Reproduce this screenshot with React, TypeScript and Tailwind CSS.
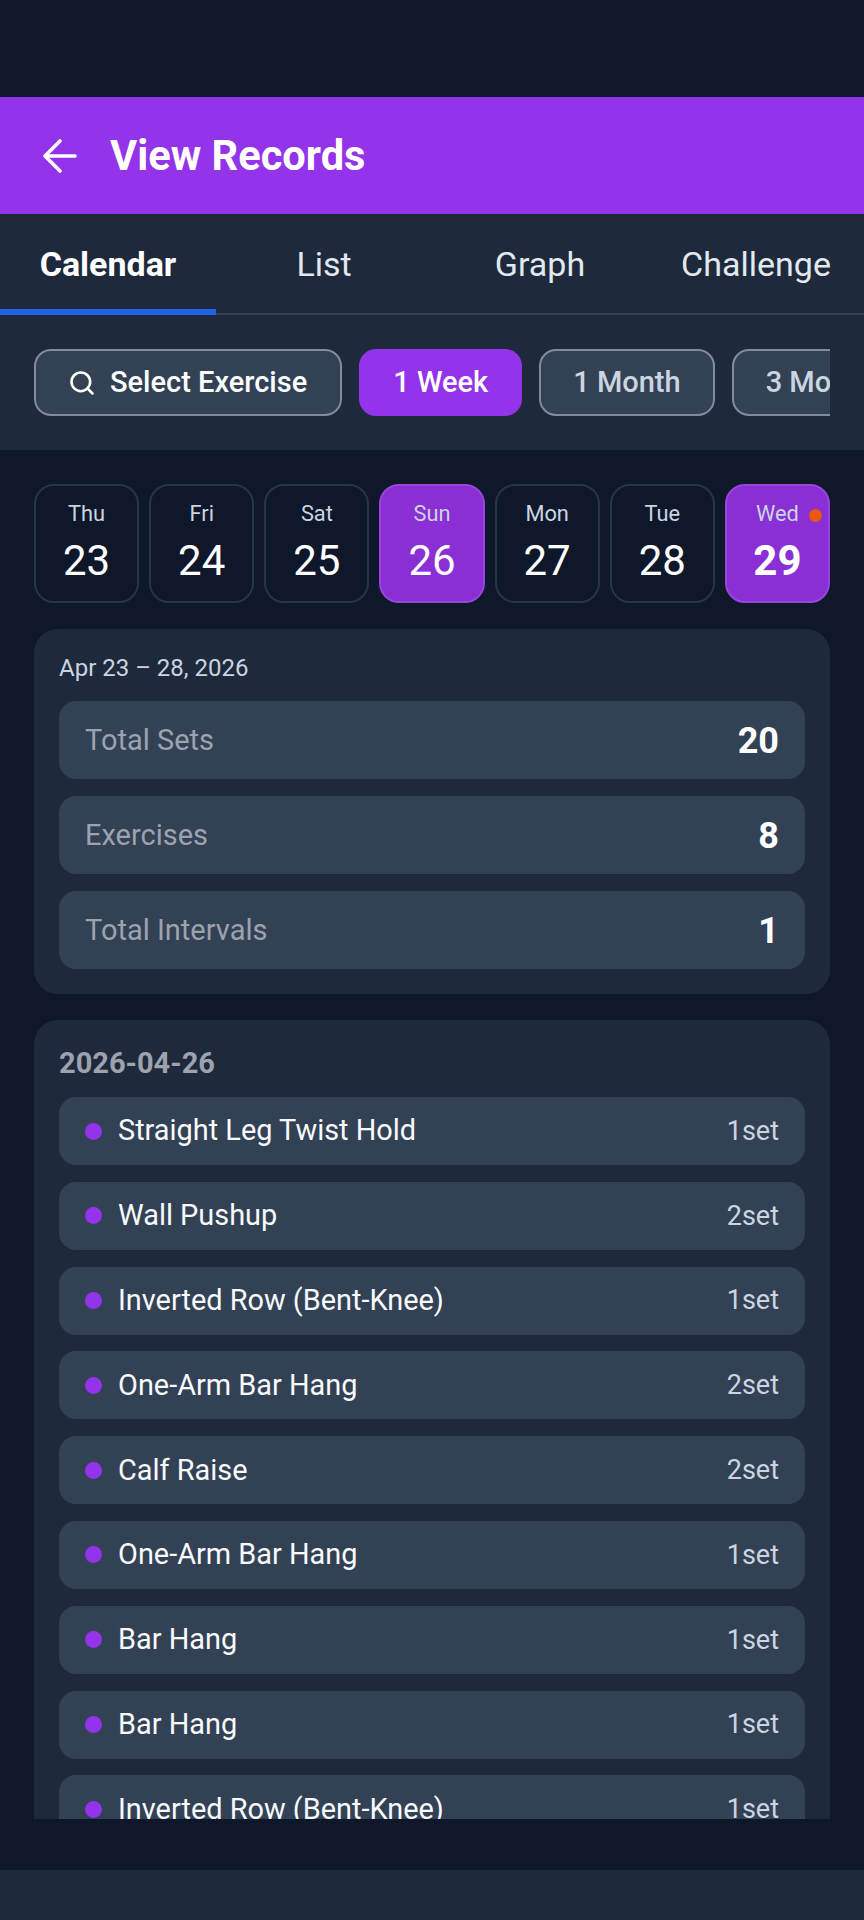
import { Search } from "lucide-react";

const tabs = ["Calendar", "List", "Graph", "Challenge"];

const ranges = [
  { label: "1 Week", active: true },
  { label: "1 Month", active: false },
  { label: "3 Months", active: false },
];

const days = [
  { name: "Thu", date: 23 },
  { name: "Fri", date: 24 },
  { name: "Sat", date: 25 },
  { name: "Sun", date: 26, selected: true },
  { name: "Mon", date: 27 },
  { name: "Tue", date: 28 },
  { name: "Wed", date: 29, selected: true, today: true },
];

const totals = [
  { label: "Total Sets", value: 20 },
  { label: "Exercises", value: 8 },
  { label: "Total Intervals", value: 1 },
];

const records = [
  { name: "Straight Leg Twist Hold", sets: 1 },
  { name: "Wall Pushup", sets: 2 },
  { name: "Inverted Row (Bent-Knee)", sets: 1 },
  { name: "One-Arm Bar Hang", sets: 2 },
  { name: "Calf Raise", sets: 2 },
  { name: "One-Arm Bar Hang", sets: 1 },
  { name: "Bar Hang", sets: 1 },
  { name: "Bar Hang", sets: 1 },
  { name: "Inverted Row (Bent-Knee)", sets: 1 },
];

export default function App() {
  return (
    <div
      className="flex flex-col w-[864px] h-[1920px] bg-[#0f172a] text-white overflow-hidden"
      style={{ fontFamily: "Roboto, sans-serif" }}
    >
      <div className="h-[97px] shrink-0" />

      <header className="flex items-center h-[117px] shrink-0 pl-[42px] gap-[32px] bg-[#9333ea]">
        <svg width="36" height="36" viewBox="0 0 36 36" fill="none" stroke="white" strokeWidth="3.6" strokeLinecap="round" strokeLinejoin="round">
          <path d="M33 18H3M18 3 3 18l15 15" />
        </svg>
        <h1 className="text-[41.6px] leading-none font-bold">View Records</h1>
      </header>

      <div className="bg-[#1e293b] shrink-0">
        <nav className="flex h-[101px] border-b-2 border-[#334155]">
          {tabs.map((tab, i) => (
            <div
              key={tab}
              className={
                i === 0
                  ? "flex-1 flex items-center justify-center pt-[5px] text-[34px] font-bold border-b-[6px] -mb-[2px] border-[#2563eb]"
                  : "flex-1 flex items-center justify-center pt-[5px] text-[34px] text-[#e2e8f0] border-b-[6px] -mb-[2px] border-transparent"
              }
            >
              {tab}
            </div>
          ))}
        </nav>

        <div className="px-[34px] py-[34px]">
          <div className="flex gap-[17px] overflow-hidden">
            <button className="flex items-center h-[67px] shrink-0 pl-[32px] pr-[33px] pt-[1px] gap-[14px] rounded-[17px] border-2 border-[#838b99] bg-[#334155] text-[29px] font-medium">
              <Search size={28} strokeWidth={2.2} />
              Select Exercise
            </button>
            {ranges.map((range) =>
              range.active ? (
                <button key={range.label} className="flex items-center h-[67px] shrink-0 px-[34px] pt-[1px] rounded-[17px] bg-[#9333ea] text-[29px] font-medium">
                  {range.label}
                </button>
              ) : (
                <button key={range.label} className="flex items-center h-[67px] shrink-0 px-[32px] pt-[1px] rounded-[17px] border-2 border-[#838b99] bg-[#334155] text-[29px] font-medium text-[#cbd5e1]">
                  {range.label}
                </button>
              )
            )}
          </div>
        </div>
      </div>

      <main className="flex-1 min-h-0 overflow-hidden px-[34px] pt-[34px] flex flex-col">
        <div className="grid grid-cols-7 gap-[10px] shrink-0">
          {days.map((day) => (
            <div
              key={day.date}
              className={
                day.selected
                  ? "relative flex flex-col items-center h-[119px] pt-[15px] rounded-[20px] border-2 border-[#9a44dc] bg-[#8a2fd6]"
                  : "relative flex flex-col items-center h-[119px] pt-[15px] rounded-[20px] border-2 border-[#283548]"
              }
            >
              <span className="text-[21.8px] leading-[26px] text-[#cbd5e1]">{day.name}</span>
              <span className={day.today ? "mt-[10px] text-[42px] leading-[48px] font-bold" : "mt-[10px] text-[42px] leading-[48px]"}>
                {day.date}
              </span>
              {day.today && <span className="absolute top-[23px] right-[6px] w-[13px] h-[13px] rounded-full bg-[#ea580c]" />}
            </div>
          ))}
        </div>

        <section className="shrink-0 mt-[26px] px-[25px] pb-[25px] pt-[22px] rounded-[24px] bg-[#1e293b]">
          <p className="text-[24px] leading-[34px] text-[#cbd5e1]">Apr 23 – 28, 2026</p>
          <div className="flex flex-col gap-[17px] mt-[16px]">
            {totals.map((item) => (
              <div key={item.label} className="flex items-center justify-between h-[78px] px-[26px] pt-[2px] rounded-[17px] bg-[#334155]">
                <span className="text-[29px] text-[#9ca3af]">{item.label}</span>
                <span className="text-[36px] font-bold">{item.value}</span>
              </div>
            ))}
          </div>
        </section>

        <section className="shrink-0 mt-[26px] px-[25px] pt-[24px] pb-[26px] rounded-[24px] bg-[#1e293b]">
          <p className="text-[29px] leading-[38px] font-bold text-[#9ca3af]">2026-04-26</p>
          <div className="flex flex-col gap-[16.8px] mt-[15px]">
            {records.map((record, i) => (
              <div key={i} className="flex items-center h-[68px] px-[26px] gap-[16px] rounded-[17px] bg-[#334155]">
                <span className="w-[17px] h-[17px] rounded-full bg-[#9333ea] shrink-0" />
                <span className="flex-1 text-[28.9px] text-[#f8fafc]">{record.name}</span>
                <span className="text-[27px] text-[#cbd5e1]">{record.sets}set</span>
              </div>
            ))}
          </div>
        </section>
      </main>

      <div className="h-[51px] shrink-0" />
      <div className="h-[50px] shrink-0 bg-[#1e293b]" />
    </div>
  );
}
